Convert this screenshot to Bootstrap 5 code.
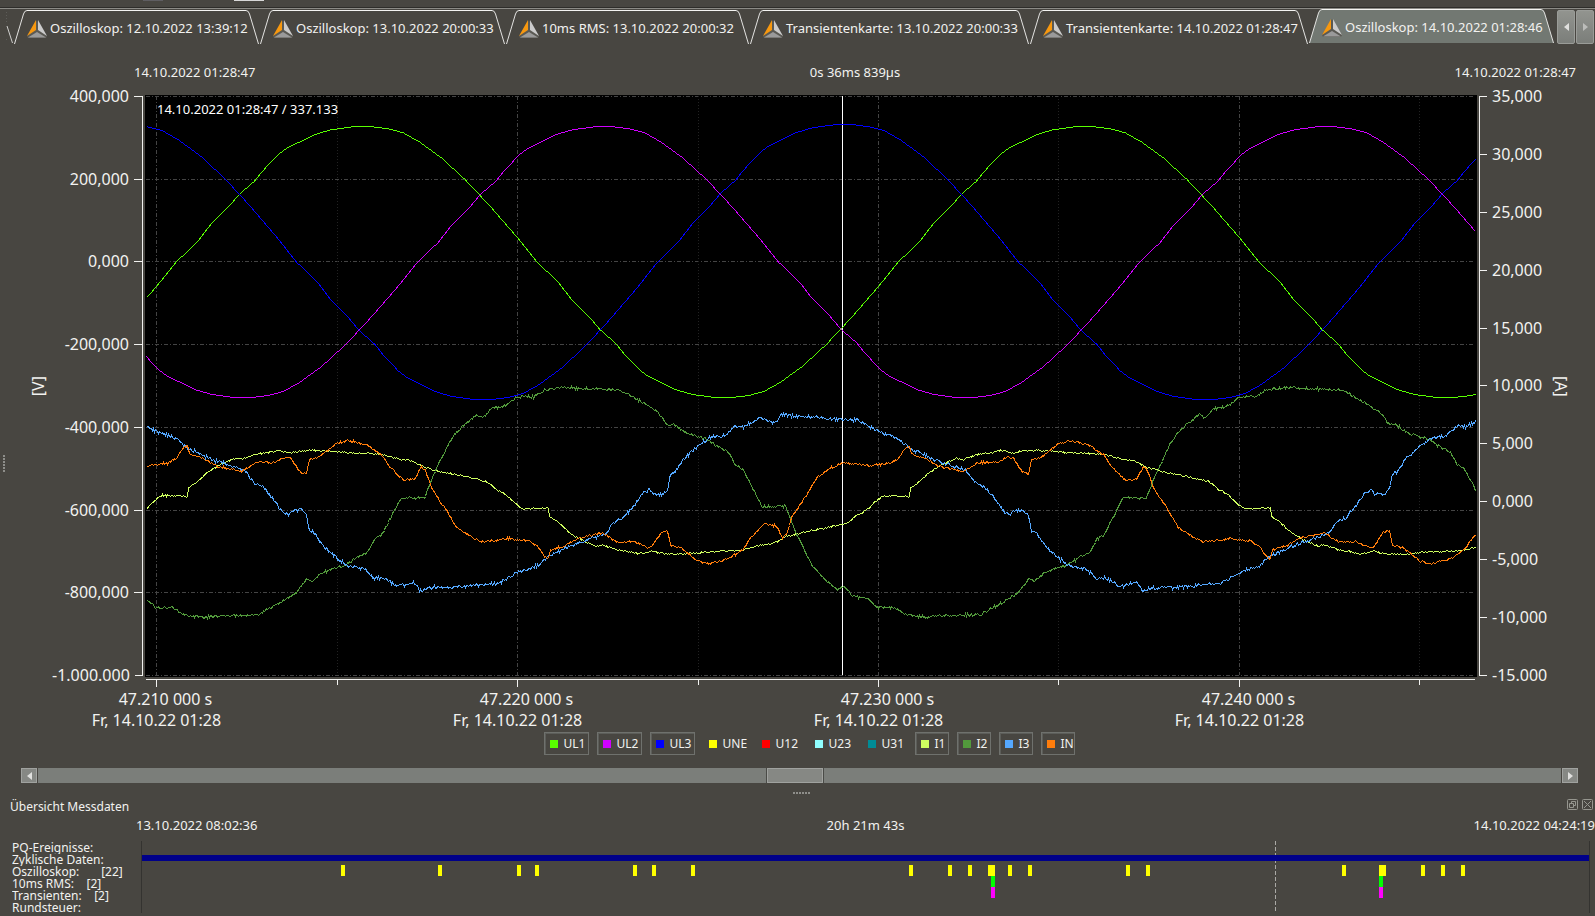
<!DOCTYPE html>
<html lang="de">
<head>
<meta charset="utf-8">
<meta name="viewport" content="width=device-width, initial-scale=1">
<title>Oszilloskop: 14.10.2022 01:28:46</title>
<link href="https://cdn.jsdelivr.net/npm/bootstrap@5.3.0/dist/css/bootstrap.min.css" rel="stylesheet">
<style>
  :root { --panel: #484641; --ink: #f2f2f0; --groove: #7b7e7a; --key: #868884; --key-edge: #a0a29f; }
  body { background: var(--panel); color: var(--ink); font: 13px/17px "Noto Sans", "Open Sans", sans-serif; }
  button { color: inherit; background: none; border: 0; padding: 0; }

  /* tab strip */
  .topline { height: 9px; border-bottom: 1px solid #8c8b86; box-shadow: inset 0 -1px #2e2d2a; }
  .topline i { height: 1px; width: 20px; margin-left: 143px; background: #5f5e62; }
  .topline i + i { width: 30px; margin-left: 71px; background: #d8d8d8; }
  .tabstrip { height: 35px; display: grid; grid-template-columns: 14px repeat(2, minmax(0, 246fr)) minmax(0, 244fr) minmax(0, 280fr) minmax(0, 279fr) minmax(0, 246fr) 40px; }
  .tab-doc { height: 34px; margin-top: 1px; margin-right: 1px; min-width: 0; }
  .tab-doc svg { flex: none; fill: none; stroke: #e4e4e2; }
  .tab-face { border-top: 1px solid #f4f4f2; height: 34px; padding-top: 2px; white-space: nowrap; min-width: 0; position: relative; z-index: 1; }
  .tab-doc.on { margin-top: 0; height: 34px; }
  .tab-doc.on .tab-face { background: #727872; }
  .tab-doc.on .cap { fill: #727872; }
  .tab-doc svg.logo { stroke: none; margin-right: 3px; }
  .tab-nudges { padding: 1px 0 0 2px; gap: 1px; }
  .tab-nudge { width: 18px; height: 34px; background: linear-gradient(#92948f, #7b7e7a); border: 1px solid #9a9c98; border-radius: 2px; }

  /* chart */
  .times { padding: 20px 19px 0 134px; height: 51px; }
  .side-l { width: 145px; flex: none; }
  .side-r { width: 118px; flex: none; }
  .scale { font-size: 16px; line-height: 21px; margin: -9px 0; }
  .scale span { display: flex; align-items: center; height: 21px; white-space: nowrap; }
  .scale span::before, .scale span::after { height: 1px; background: var(--ink); }
  .scale-l { width: 90px; }
  .scale-l span { justify-content: flex-end; }
  .scale-l span::after { content: ""; width: 8px; margin-left: 5px; }
  .scale-r span::before { content: ""; width: 7px; margin-right: 5px; }
  .rule { width: 1px; margin: 1px 2px; background: var(--ink); }
  .side-r .rule { margin-right: 0; }
  .unit { writing-mode: vertical-rl; font-size: 16px; line-height: 20px; }
  .unit-l { transform: rotate(180deg); }
  .side-grip { padding: 154px 0 0 3px; }
  .grip { width: 2px; background: repeating-linear-gradient(#8e8e8a 0 2px, transparent 2px 3px); height: 17px; }
  .grip-h { width: 17px; height: 2px; background: repeating-linear-gradient(90deg, #8e8e8a 0 2px, transparent 2px 3px); }
  .plot { background: #000; min-width: 0; }
  .plot svg, .ticks, .lanes svg { display: block; width: 100%; height: 100%; shape-rendering: crispEdges; }
  .plot svg { position: absolute; inset: 0; }
  .stamp { position: absolute; left: 12px; top: 6px; color: #fff; }
  .major { stroke: #444; stroke-dasharray: 4 2 1 2; }
  .minor { stroke: #222; stroke-dasharray: 1 2; }
  .wave { fill: none; vector-effect: non-scaling-stroke; }
  .xaxis { margin: 0 118px 0 145px; }
  .ticks { height: 11px; stroke: var(--ink); }
  .xlabels { height: 42px; font-size: 16px; line-height: 21px; }
  .xlabels div { position: absolute; top: 1px; transform: translateX(-50%); white-space: nowrap; text-align: center; }
  .xlabels div span { display: block; padding-left: 18px; }

  /* legend */
  .legend { gap: 8px; margin: 2px 120px 13px 143px; font-size: 12px; line-height: 17px; }
  .chan { width: 45px; height: 23px; border: 1px solid transparent; padding: 0 0 0 5px; display: flex; align-items: center; gap: 6px; }
  .chan.short { width: 34px; }
  .chan.on { border-color: #6f716d; box-shadow: inset 1px 1px #5c5d59; }
  .chan i { width: 8px; height: 8px; flex: none; }

  /* scroll bar */
  .scroller { height: 15px; margin: 0 17px 0 21px; gap: 1px; }
  .scroller button { width: 16px; height: 15px; background: var(--key); border: 1px solid var(--key-edge); }
  .scroller svg, .tab-nudge svg { display: block; margin: auto; fill: #e0e0de; }
  .scroller input { appearance: none; flex: 1; min-width: 0; height: 15px; margin: 0; background: var(--groove); }
  .scroller input::-webkit-slider-thumb { appearance: none; width: 56px; height: 15px; border: 1px solid var(--key-edge); border-radius: 0; background: var(--key); box-shadow: -1px 0 #4a4b47, 1px 0 #4a4b47; }

  /* overview */
  .split { height: 13px; padding-top: 9px; }
  .ov-title { height: 21px; padding: 0 2px 0 10px; font-size: 12px; }
  .ov-title button svg { display: block; fill: none; stroke: #96968f; }
  .ov-times { padding-left: 136px; height: 24px; }
  .ov-body { margin-bottom: 3px; height: 72px; }
  .ov-names { width: 141px; flex: none; padding: 1px 0 0 12px; font-size: 12px; }
  .ov-names div { height: 12px; line-height: 12px; overflow: hidden; white-space: pre; }
  .lanes { border-left: 1px solid #343330; border-right: 1px solid #343330; margin-right: 5px; min-width: 0; }
</style>
</head>
<body class="d-flex flex-column vh-100 overflow-hidden">

<svg width="0" height="0" class="position-absolute" aria-hidden="true">
  <symbol id="logo" viewBox="0 0 20 18">
    <path d="M10 0 20 16 19 18H1L0 16Z" fill="#5a5953"/>
    <path d="M9 0V10L0 16Z" fill="#f7980f"/>
    <path d="M11 0 20 16 11 10Z" fill="#cbcbcb"/>
    <path d="M1 17.500 10 12 19 17.500Z" fill="#9a9a9a"/>
  </symbol>
  <symbol id="capL" viewBox="0 0 13 34"><path d="M.5 34 9.500 4Q10.500.5 13 .5V34Z" stroke="none"/><path d="M.5 34 9.500 4Q10.500.5 13 .5" fill="none"/></symbol>
  <symbol id="capR" viewBox="0 0 13 34"><path d="M12.500 34 3.500 4Q2.500.5 0 .5V34Z" stroke="none"/><path d="M12.500 34 3.500 4Q2.500.5 0 .5" fill="none"/></symbol>
</svg>

<div class="topline d-flex"><i></i><i></i></div>
<nav class="tabstrip" role="tablist" aria-label="Messungen" id="tabs">
  <svg width="14" height="35"><path d="M7 17 12.500 34" stroke="#d0d0ce" fill="none"/><path d="M6.500 3V15M6.500 30V33" stroke="#5d5c58" stroke-dasharray="1 2"/></svg>
</nav>

<div class="times d-flex justify-content-between"><span>14.10.2022 01:28:47</span><span>0s 36ms 839µs</span><span>14.10.2022 01:28:47</span></div>

<main class="d-flex flex-grow-1" style="min-height:0">
  <div class="side-l d-flex">
    <div class="side-grip d-flex align-items-center"><div class="grip"></div></div>
    <div class="d-flex align-items-center ms-auto me-1"><div class="unit unit-l">[V]</div></div>
    <div class="scale scale-l d-flex flex-column justify-content-between">
      <span>400,000</span><span>200,000</span><span>0,000</span><span>-200,000</span><span>-400,000</span><span>-600,000</span><span>-800,000</span><span>-1.000.000</span>
    </div>
    <div class="rule ms-0"></div>
  </div>
  <div class="plot flex-grow-1 position-relative">
    <svg viewBox="0 0 1332 582" preserveAspectRatio="none" id="scope" role="img" aria-label="Spannungen und Ströme"></svg>
    <div class="stamp">14.10.2022 01:28:47 / 337.133</div>
  </div>
  <div class="side-r d-flex">
    <div class="rule"></div>
    <div class="scale scale-r d-flex flex-column justify-content-between">
      <span>35,000</span><span>30,000</span><span>25,000</span><span>20,000</span><span>15,000</span><span>10,000</span><span>5,000</span><span>0,000</span><span>-5,000</span><span>-10,000</span><span>-15.000</span>
    </div>
    <div class="d-flex align-items-center ms-1"><div class="unit">[A]</div></div>
  </div>
</main>

<div class="xaxis">
  <svg class="ticks" viewBox="0 0 1332 11" preserveAspectRatio="none"><path fill="none" d="M1 2.500H1330M11.500 3V10M192.500 3V8M372.500 3V10M553.500 3V8M733.500 3V10M913.500 3V8M1094.500 3V10M1274.500 3V8"/></svg>
  <div class="xlabels position-relative">
    <div style="left:0.86%"><span>47.210 000 s</span>Fr, 14.10.22 01:28</div>
    <div style="left:27.97%"><span>47.220 000 s</span>Fr, 14.10.22 01:28</div>
    <div style="left:55.07%"><span>47.230 000 s</span>Fr, 14.10.22 01:28</div>
    <div style="left:82.17%"><span>47.240 000 s</span>Fr, 14.10.22 01:28</div>
  </div>
</div>

<div class="legend d-flex justify-content-center" id="legend"></div>

<div class="scroller d-flex">
  <button type="button" aria-label="Zurück"><svg width="5" height="8"><path d="M5 0V8L0 4Z"/></svg></button>
  <input type="range" min="0" max="1000" value="497" aria-label="Zeitposition">
  <button type="button" aria-label="Weiter"><svg width="5" height="8"><path d="M0 0V8L5 4Z"/></svg></button>
</div>
<div class="split d-flex justify-content-center"><div class="grip-h ms-2"></div></div>

<section>
  <div class="ov-title d-flex justify-content-between align-items-center">
    <span>Übersicht Messdaten</span>
    <span class="d-flex gap-1 mb-1">
      <button type="button" aria-label="Lösen"><svg width="11" height="11"><rect x=".5" y=".5" width="10" height="10" rx="1"/><path d="M4.500 4.500V2.500H8.500V6.500H6.500M2.500 4.500H6.500V8.500H2.500Z"/></svg></button>
      <button type="button" aria-label="Schließen"><svg width="11" height="11"><rect x=".5" y=".5" width="10" height="10" rx="1"/><path d="M2 2 9 9M9 2 2 9"/></svg></button>
    </span>
  </div>
  <div class="ov-times d-flex justify-content-between"><span>13.10.2022 08:02:36</span><span>20h 21m 43s</span><span>14.10.2022 04:24:19</span></div>
  <div class="ov-body d-flex">
    <div class="ov-names"><div>PQ-Ereignisse:</div><div>Zyklische Daten:</div><div>Oszilloskop:       [22]</div><div>10ms RMS:    [2]</div><div>Transienten:    [2]</div><div>Rundsteuer:</div></div>
    <div class="lanes flex-grow-1"><svg viewBox="0 0 1447 72" preserveAspectRatio="none" id="lanes" role="img" aria-label="Übersicht der Ereignisse"></svg></div>
  </div>
</section>

<script src="https://cdn.jsdelivr.net/npm/bootstrap@5.3.0/dist/js/bootstrap.bundle.min.js"></script>
<script>
  // Tabs
  const names = ['Oszilloskop: 12.10.2022 13:39:12', 'Oszilloskop: 13.10.2022 20:00:33', '10ms RMS: 13.10.2022 20:00:32',
    'Transientenkarte: 13.10.2022 20:00:33', 'Transientenkarte: 14.10.2022 01:28:47', 'Oszilloskop: 14.10.2022 01:28:46'];
  const cap = s => `<svg class="cap" width="13" height="34"><use href="#cap${s}"/></svg>`;
  document.getElementById('tabs').insertAdjacentHTML('beforeend', names.map((n, i) =>
    `<button type="button" role="tab" class="tab-doc d-flex${i === 5 ? ' on' : ''}" aria-selected="${i === 5}">${cap('L')}<span class="tab-face d-flex align-items-center flex-grow-1"><svg class="logo" width="20" height="18"><use href="#logo"/></svg>${n}</span>${cap('R')}</button>`).join('') +
    `<div class="tab-nudges d-flex"><button type="button" class="tab-nudge" aria-label="Tabs zurück"><svg width="5" height="8"><path d="M5 0V8L0 4Z"/></svg></button><button type="button" class="tab-nudge" aria-label="Tabs vor"><svg width="5" height="8" opacity=".6"><path d="M0 0V8L5 4Z"/></svg></button></div>`);

  // Legend: name, colour, visible
  const chans = [['UL1', '#59ff00', 1], ['UL2', '#d000ff', 1], ['UL3', '#0000ff', 1], ['UNE', '#ffff00', 0], ['U12', '#ff0000', 0],
    ['U23', '#90ffff', 0], ['U31', '#008c96', 0], ['I1', '#cfff60', 1], ['I2', '#529a3c', 1], ['I3', '#55a8ff', 1], ['IN', '#ff7d0c', 1]];
  document.getElementById('legend').innerHTML = chans.map(([n, c, on]) =>
    `<button type="button" class="chan${n.length < 3 ? ' short' : ''}${on ? ' on' : ''}" aria-pressed="${!!on}"><i style="background:${c}"></i>${n}</button>`).join('');

  // One half wave per channel; the second half is its mirror image about the zero line.
  const HALF = 361;
  const volt = [0,0,21,20,34,37,52,55,63,68,78,81,86,91,102,108,110,114,124,121,138,128,155,133,177,136,196,136,212,134,227,130,243,121,265,105,289,83,303,68,315,55,341,25,361,0];
  const i1 = [146,508,153,501,161,495,187,496,188,487,195,483,207,472,220,464,234,458,241,459,255,454,269,452,277,450,284,451,289,453,303,450,324,450,344,452,372,453,382,454,396,458,413,461,424,467,444,472,465,476,486,481,496,489,504,493,507,496];
  const i2 = [146,599,155,607,172,607,183,614,203,617,220,615,238,615,258,614,269,608,282,601,296,592,306,579,312,580,324,571,344,565,360,555,367,552,374,539,381,535,393,512,401,497,424,498,429,485,432,477,439,462,448,443,455,433,465,423,477,414,482,418,491,408,503,406,507,404];
  const i3 = [146,426,158,432,176,438,186,447,207,457,220,462,238,468,244,470,253,482,262,486,274,500,282,512,288,514,291,510,301,509,306,515,309,530,313,531,322,545,338,559,348,566,363,568,374,578,382,577,398,586,412,582,417,584,419,590,434,587,451,587,482,584,496,584,507,578];
  const iN = [146,466,155,464,167,463,176,458,183,447,187,445,189,454,203,458,217,466,241,471,255,462,274,462,286,456,291,458,300,472,306,473,309,459,320,456,336,443,348,440,367,445,382,455,389,466,403,480,415,478,421,466,425,470,431,488,444,507,456,527,468,535,480,541,496,540,507,538];
  const lerp = (a, t) => { let i = 0; while (i < a.length - 4 && a[i + 2] < t) i += 2; return a[i + 1] + (a[i + 3] - a[i + 1]) * (t - a[i]) / (a[i + 2] - a[i]); };
  const half = (a, start, x) => { const k = Math.floor((x - start) / HALF); return [lerp(a, x - start - k * HALF + a[0]), k % 2 ? -1 : 1]; };
  let seed = 7; const rnd = () => (seed = seed * 16807 % 2147483647) / 2147483647 - .5;
  const trace = (colour, y, rough) => {
    let d = '';
    for (let x = 146; x <= 1475; x++) d += (d ? 'L' : 'M') + (x - 144.5) + ' ' + (Math.round(y(x) + rnd() * rough - 95) + .5);
    return `<path class="wave" stroke="${colour}" d="${d}"/>`;
  };
  const voltage = (start, gain) => x => { const [v, s] = half(volt, start, x); return 261.6 - v * s * gain; };
  const current = a => x => { const [y, s] = half(a, 146, x); return 501.7 + (y - 501.7) * s; };
  let g = '';
  for (const y of [1, 84, 166, 249, 332, 415, 497, 580]) g += `<path class="major" d="M1 ${y + .5}H1328"/>`;
  for (const x of [11, 372, 733, 1094]) g += `<path class="major" d="M${x + .5} 1V580"/>`;
  for (const x of [192, 553, 913, 1274]) g += `<path class="minor" d="M${x + .5} 1V580"/>`;
  g += '<path d="M697.500 1V580" stroke="#fff"/>';
  g += trace('#59ff00', voltage(175.6, .995), 0) + trace('#d000ff', voltage(417 - 2 * HALF, .995), 0) + trace('#0000ff', voltage(657 - 2 * HALF, 1.01), 0);
  g += trace('#cfff60', current(i1), 1.6) + trace('#529a3c', current(i2), 2.6) + trace('#55a8ff', current(i3), 3.2) + trace('#ff7d0c', current(iN), 2);
  document.getElementById('scope').innerHTML = g;

  // Overview lanes: position and width of each recording
  const box = (x, y, w, h, c) => `<rect x="${x - 142}" y="${y}" width="${w}" height="${h}" fill="${c}"/>`;
  let o = '<path d="M1133.500 0V72" stroke="#aaa9a5" stroke-dasharray="4 2"/>' + box(142, 14, 1447, 6, '#000089');
  for (const x of [341, 438, 517, 535, 633, 652, 691, 909, 948, 968, 1008, 1028, 1126, 1146, 1342, 1421, 1441, 1461]) o += box(x, 24, 4, 11, '#ff0');
  for (const x of [988, 1379]) o += box(x, 24, 7, 11, '#ff0');
  for (const x of [991, 1379]) o += box(x, 35, 4, 11, '#0f0') + box(x, 46, 4, 11, '#f0f');
  document.getElementById('lanes').innerHTML = o;
</script>
</body>
</html>
